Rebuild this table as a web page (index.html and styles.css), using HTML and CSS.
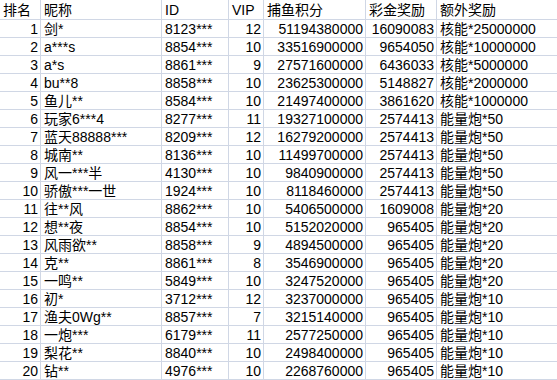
FILE: index.html
```html
<!DOCTYPE html>
<html lang="zh-CN">
<head>
<meta charset="utf-8">
<title>排名</title>
<link rel="stylesheet" href="styles.css">
</head>
<body>
<div class="sheet">
  <div class="c h">排名</div><div class="c h">昵称</div><div class="c h">ID</div><div class="c h">VIP</div><div class="c h">捕鱼积分</div><div class="c h">彩金奖励</div><div class="c h">额外奖励</div>
  <div class="c r">1</div><div class="c">剑*</div><div class="c">8123***</div><div class="c r">12</div><div class="c r">51194380000</div><div class="c r">16090083</div><div class="c">核能*25000000</div>
  <div class="c r">2</div><div class="c">a***s</div><div class="c">8854***</div><div class="c r">10</div><div class="c r">33516900000</div><div class="c r">9654050</div><div class="c">核能*10000000</div>
  <div class="c r">3</div><div class="c">a*s</div><div class="c">8861***</div><div class="c r">9</div><div class="c r">27571600000</div><div class="c r">6436033</div><div class="c">核能*5000000</div>
  <div class="c r">4</div><div class="c">bu**8</div><div class="c">8858***</div><div class="c r">10</div><div class="c r">23625300000</div><div class="c r">5148827</div><div class="c">核能*2000000</div>
  <div class="c r">5</div><div class="c">鱼儿**</div><div class="c">8584***</div><div class="c r">10</div><div class="c r">21497400000</div><div class="c r">3861620</div><div class="c">核能*1000000</div>
  <div class="c r">6</div><div class="c">玩家6***4</div><div class="c">8277***</div><div class="c r">11</div><div class="c r">19327100000</div><div class="c r">2574413</div><div class="c">能量炮*50</div>
  <div class="c r">7</div><div class="c">蓝天88888***</div><div class="c">8209***</div><div class="c r">12</div><div class="c r">16279200000</div><div class="c r">2574413</div><div class="c">能量炮*50</div>
  <div class="c r">8</div><div class="c">城南**</div><div class="c">8136***</div><div class="c r">10</div><div class="c r">11499700000</div><div class="c r">2574413</div><div class="c">能量炮*50</div>
  <div class="c r">9</div><div class="c">风一***半</div><div class="c">4130***</div><div class="c r">10</div><div class="c r">9840900000</div><div class="c r">2574413</div><div class="c">能量炮*50</div>
  <div class="c r">10</div><div class="c">骄傲***一世</div><div class="c">1924***</div><div class="c r">10</div><div class="c r">8118460000</div><div class="c r">2574413</div><div class="c">能量炮*50</div>
  <div class="c r">11</div><div class="c">往**风</div><div class="c">8862***</div><div class="c r">10</div><div class="c r">5406500000</div><div class="c r">1609008</div><div class="c">能量炮*20</div>
  <div class="c r">12</div><div class="c">想**夜</div><div class="c">8854***</div><div class="c r">10</div><div class="c r">5152020000</div><div class="c r">965405</div><div class="c">能量炮*20</div>
  <div class="c r">13</div><div class="c">风雨欲**</div><div class="c">8858***</div><div class="c r">9</div><div class="c r">4894500000</div><div class="c r">965405</div><div class="c">能量炮*20</div>
  <div class="c r">14</div><div class="c">克**</div><div class="c">8861***</div><div class="c r">8</div><div class="c r">3546900000</div><div class="c r">965405</div><div class="c">能量炮*20</div>
  <div class="c r">15</div><div class="c">一鸣**</div><div class="c">5849***</div><div class="c r">10</div><div class="c r">3247520000</div><div class="c r">965405</div><div class="c">能量炮*20</div>
  <div class="c r">16</div><div class="c">初*</div><div class="c">3712***</div><div class="c r">12</div><div class="c r">3237000000</div><div class="c r">965405</div><div class="c">能量炮*10</div>
  <div class="c r">17</div><div class="c">渔夫0Wg**</div><div class="c">8857***</div><div class="c r">7</div><div class="c r">3215140000</div><div class="c r">965405</div><div class="c">能量炮*10</div>
  <div class="c r">18</div><div class="c">一炮***</div><div class="c">6179***</div><div class="c r">11</div><div class="c r">2577250000</div><div class="c r">965405</div><div class="c">能量炮*10</div>
  <div class="c r">19</div><div class="c">梨花**</div><div class="c">8840***</div><div class="c r">10</div><div class="c r">2498400000</div><div class="c r">965405</div><div class="c">能量炮*10</div>
  <div class="c r">20</div><div class="c">钻**</div><div class="c">4976***</div><div class="c r">10</div><div class="c r">2268760000</div><div class="c r">965405</div><div class="c">能量炮*10</div>
</div>
</body>
</html>
```
FILE: styles.css
```css
html, body {
  margin: 0;
  padding: 0;
  background: #ffffff;
}
.sheet {
  display: grid;
  grid-template-columns: 40px 120px 66px 34px 101px 70px 121px;
  grid-template-rows: 19px repeat(20, 17px);
  gap: 1px;
  padding-bottom: 1px;
  background: #d0d7e5;
  width: 557px;
  height: 380px;
  box-sizing: border-box;
  font-family: "Liberation Sans", "Noto Sans CJK SC", sans-serif;
  font-size: 14px;
  color: #000000;
}
.c {
  background: #ffffff;
  padding: 1px 3px 0;
  line-height: 16px;
  white-space: nowrap;
  overflow: hidden;
}
.h {
  line-height: 18px;
}
.r {
  text-align: right;
  padding-right: 2px;
}
```
